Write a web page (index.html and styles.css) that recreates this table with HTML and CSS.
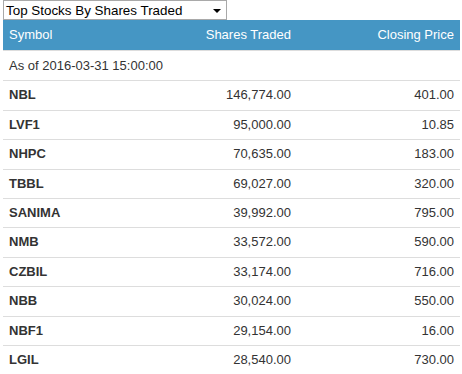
FILE: index.html
```html
<!DOCTYPE html>
<html>
<head>
<meta charset="utf-8">
<link rel="stylesheet" href="styles.css">
</head>
<body>
<div class="widget">
  <div class="picker">
    <span class="picker-label">Top Stocks By Shares Traded</span>
    <span class="picker-arrow"></span>
  </div>
  <table class="stocks">
    <thead>
      <tr>
        <th class="col-sym">Symbol</th>
        <th class="num">Shares Traded</th>
        <th class="num col-price">Closing Price</th>
      </tr>
    </thead>
    <tbody>
      <tr><td colspan="3" class="asof">As of 2016-03-31 15:00:00</td></tr>
      <tr><td class="sym">NBL</td><td class="num">146,774.00</td><td class="num">401.00</td></tr>
      <tr><td class="sym">LVF1</td><td class="num">95,000.00</td><td class="num">10.85</td></tr>
      <tr><td class="sym">NHPC</td><td class="num">70,635.00</td><td class="num">183.00</td></tr>
      <tr><td class="sym">TBBL</td><td class="num">69,027.00</td><td class="num">320.00</td></tr>
      <tr><td class="sym">SANIMA</td><td class="num">39,992.00</td><td class="num">795.00</td></tr>
      <tr><td class="sym">NMB</td><td class="num">33,572.00</td><td class="num">590.00</td></tr>
      <tr><td class="sym">CZBIL</td><td class="num">33,174.00</td><td class="num">716.00</td></tr>
      <tr><td class="sym">NBB</td><td class="num">30,024.00</td><td class="num">550.00</td></tr>
      <tr><td class="sym">NBF1</td><td class="num">29,154.00</td><td class="num">16.00</td></tr>
      <tr><td class="sym">LGIL</td><td class="num">28,540.00</td><td class="num">730.00</td></tr>
    </tbody>
  </table>
</div>
</body>
</html>
```
FILE: styles.css
```css
html, body {
  margin: 0;
  padding: 0;
  background: #ffffff;
}
body {
  font-family: "Liberation Sans", Arial, sans-serif;
  font-size: 13px;
  color: #333333;
}
.widget {
  padding: 0 2px 0 3px;
}
.picker {
  width: 224px;
  height: 20px;
  box-sizing: border-box;
  border: 1px solid #a9a9a9;
  display: flex;
  align-items: center;
  justify-content: space-between;
  padding: 0 5px 0 2px;
  color: #000000;
  font-size: 13.4px;
  background: #fff;
}
.picker-arrow {
  width: 0;
  height: 0;
  border-left: 4px solid transparent;
  border-right: 4px solid transparent;
  border-top: 4px solid #000;
  margin-top: 1px;
}
.stocks {
  width: 100%;
  border-collapse: collapse;
  border-spacing: 0;
}
.stocks th {
  background: #4596c4;
  color: #ffffff;
  font-weight: normal;
  text-align: left;
  padding: 6px 6px 6px 6px;
  line-height: 18px;
  border-bottom: 1px solid #dddddd;
}
.stocks td {
  padding: 5px 6px;
  line-height: 18.4px;
  border-top: 1px solid #dddddd;
}
.stocks td.asof {
  padding-top: 6px;
  padding-bottom: 5px;
}
.stocks tbody tr:first-child td {
  border-top: none;
}
.stocks .num {
  text-align: right;
}
.stocks .col-price {
  width: 151px;
}
.stocks .sym {
  font-weight: bold;
}
```
